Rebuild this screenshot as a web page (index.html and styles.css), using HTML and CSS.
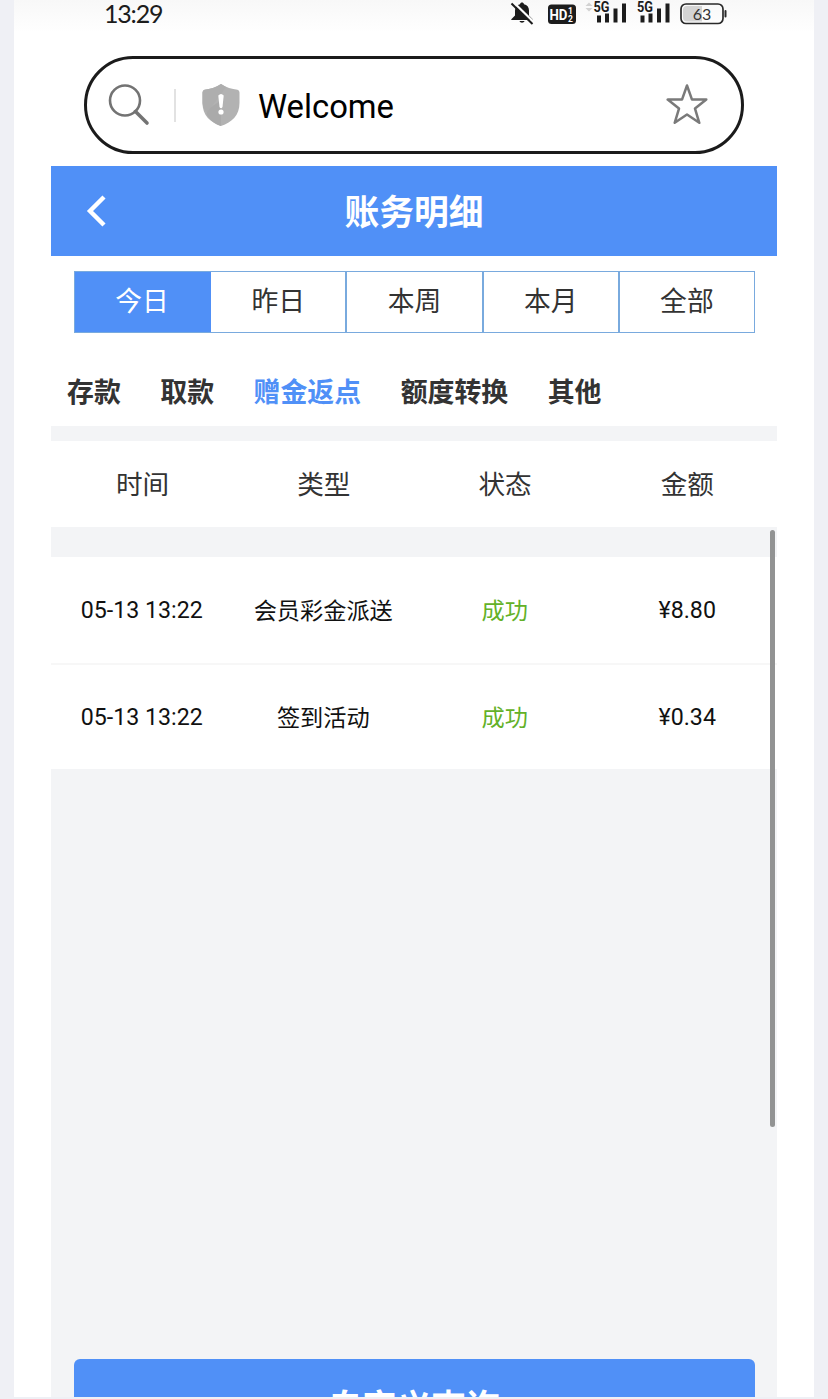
FILE: index.html
```html
<!DOCTYPE html>
<html lang="zh-CN">
<head>
  <meta charset="UTF-8">
  <meta name="viewport" content="width=device-width, initial-scale=1.0">
  <title>账务明细</title>
  <link rel="stylesheet" href="styles.css">
</head>
<body>
  <div class="phone">
    <div class="status-bar">
      <span class="clock">13:29</span>
      <svg class="status-icons" width="220" height="28" viewBox="0 0 220 28">
        <!-- muted bell -->
        <path d="M4.300 19.200 L8 15.400 V10.500 C8 7 10 4.700 13 4.200 C13.300 2 16.700 2 17 4.200 C20 4.700 22 7 22 10.500 V15.400 L25.700 19.200 V20 H4.300 Z" fill="#1c1c1c"/>
        <path d="M12.500 21 H17.500 C17 23.200 13 23.200 12.500 21 Z" fill="#1c1c1c"/>
        <path d="M6.500 2.400 L28 23.400" stroke="#fdfdfd" stroke-width="2.200"/>
        <path d="M4.500 3.500 L25.500 24" stroke="#1c1c1c" stroke-width="2"/>
        <!-- HD -->
        <rect x="41" y="4.500" width="28" height="19.500" rx="3.500" fill="#1c1c1c"/>
        <text x="42.500" y="19.500" class="hd" textLength="18" lengthAdjust="spacingAndGlyphs">HD</text>
        <text x="61" y="13.500" class="hd-sub">1</text>
        <text x="61" y="21.800" class="hd-sub">2</text>
        <!-- signals -->
        <path d="M78.500 6 L82 2.500 L85.500 6 Z M78.500 8 L82 11.500 L85.500 8 Z" fill="#d2d2d2"/>
        <text x="86.500" y="12" class="net" textLength="16" lengthAdjust="spacingAndGlyphs">5G</text>
        <path d="M92 15.500 V22.500 M100 13.500 V22.500 M108.500 8.500 V22.500 M117 3.500 V22.500" class="bars"/>
        <text x="130" y="12" class="net" textLength="16" lengthAdjust="spacingAndGlyphs">5G</text>
        <path d="M135.500 15.500 V22.500 M143.500 13.500 V22.500 M152 8.500 V22.500 M160.500 3.500 V22.500" class="bars"/>
        <!-- battery -->
        <rect x="174" y="4" width="42" height="19.500" rx="5" fill="none" stroke="#2a2a2a" stroke-width="1.700"/>
        <path d="M180 6 H195 V21.500 H180 Q176 21.500 176 17.500 V10 Q176 6 180 6 Z" fill="#d4d4d4"/>
        <rect x="217.500" y="10" width="2" height="7.500" rx="1" fill="#2a2a2a"/>
        <text x="195" y="20" class="level">63</text>
      </svg>
    </div>

    <div class="address-bar">
      <svg class="search-icon" width="42" height="42" viewBox="0 0 42 42">
        <circle cx="17" cy="16.500" r="15" fill="none" stroke="#737373" stroke-width="2.600"/>
        <path d="M27.500 27.500 L39 39" stroke="#737373" stroke-width="3.600" stroke-linecap="round"/>
      </svg>
      <span class="divider"></span>
      <svg class="shield" width="38" height="42" viewBox="0 0 38 42">
        <path d="M19 0 C24 3.500 30 5 35.500 5.700 Q37.500 6.200 37.500 8.500 V19 C37.500 31 30 38.500 19 42 C8 38.500 .5 31 .5 19 V8.500 Q.5 6.200 2.500 5.700 C8 5 14 3.500 19 0 Z" fill="#b2b2b2"/>
        <path d="M19 0 L24 3 L19 10 L5 29 C2 25.500 .5 22 .5 19 V8.500 Q.5 6.200 2.500 5.700 C8 5 14 3.500 19 0 Z" fill="#aeaeae"/>
        <path d="M19 17 C11 21 6 25 4.500 30 C7.500 36 13 40 19 42 Z" fill="#aaaaaa"/>
        <path d="M16.300 11.500 Q19 8.500 21.700 11.500 L20.500 23 Q19 25.500 17.500 23 Z" fill="#fff"/>
        <circle cx="19" cy="28" r="2.600" fill="#fff"/>
      </svg>
      <span class="page-name">Welcome</span>
      <svg class="star" width="44" height="42" viewBox="0 0 44 42">
        <path d="M22 1.500 L27 15.600 H41.300 L30 24.600 L34.300 38.800 L22 30.500 L9.700 38.800 L14 24.600 L2.700 15.600 H17 Z" fill="none" stroke="#7a7a7a" stroke-width="2.500" stroke-linejoin="round"/>
      </svg>
    </div>

    <div class="app">
      <header>
        <svg class="back" width="20" height="32" viewBox="0 0 20 32">
          <path d="M18 2 L4 16 L18 30" fill="none" stroke="#fff" stroke-width="4.400"/>
        </svg>
        <h1>账务明细</h1>
      </header>

      <nav class="filters">
        <div class="ranges">
          <a class="active">今日</a>
          <a>昨日</a>
          <a>本周</a>
          <a>本月</a>
          <a>全部</a>
        </div>
        <div class="types">
          <a>存款</a>
          <a>取款</a>
          <a class="active">赠金返点</a>
          <a>额度转换</a>
          <a>其他</a>
        </div>
      </nav>

      <div class="row head">
        <span>时间</span><span>类型</span><span>状态</span><span>金额</span>
      </div>

      <main>
        <div class="row">
          <span>05-13 13:22</span><span class="cjk">会员彩金派送</span><span class="cjk success">成功</span><span>¥8.80</span>
        </div>
        <div class="row">
          <span>05-13 13:22</span><span class="cjk">签到活动</span><span class="cjk success">成功</span><span>¥0.34</span>
        </div>
        <div class="scrollbar"></div>
        <button class="query">自定义查询</button>
      </main>
    </div>
  </div>
</body>
</html>
```
FILE: styles.css
```css
:root {
  --blue: #5090f7;
  --line: #79aade;
  --gray: #f3f4f6;
  --text: #333;
}
* { box-sizing: border-box; }
body {
  margin: 0;
  height: 1399px;
  overflow: hidden;
  background: #eff0f5;
  font-family: Roboto, "Noto Sans CJK SC", sans-serif;
  color: var(--text);
}

.phone {
  width: 800px;
  height: 1397px;
  margin: 0 auto;
  padding: 0 37px;
  overflow: hidden;
  display: flex;
  flex-direction: column;
  background: linear-gradient(#f8f8f8, #fefefe 30px, #fff 32px);
}

/* Status bar */
.status-bar {
  flex: none;
  height: 56px;
  padding: 0 50px 0 53px;
  display: flex;
  justify-content: space-between;
  align-items: flex-start;
}
.clock {
  font: 25px/26px Lato, sans-serif;
  letter-spacing: -1.2px;
  color: #1c1c1c;
}
.hd { font: bold 15px Roboto, sans-serif; fill: #fff; }
.hd-sub { font: bold 8.500px/8px Roboto, sans-serif; fill: #fff; }
.net { font: bold 14.500px Roboto, sans-serif; fill: #1c1c1c; }
.level { font: 16px Lato, sans-serif; fill: #333; text-anchor: middle; }
.bars { stroke: #1c1c1c; stroke-width: 4; }

/* Browser address bar */
.address-bar {
  flex: none;
  height: 98px;
  margin: 0 33px 12px;
  padding: 0 32px 0 21px;
  border: 3.500px solid #1b1b1b;
  border-radius: 49px;
  display: flex;
  align-items: center;
}
.divider {
  width: 2px;
  height: 33px;
  margin: 0 26px 0 24px;
  background: #e2e2e2;
}
.page-name {
  flex: 1;
  margin-left: 18px;
  padding-top: 3px;
  font-size: 32.8px;
  line-height: 40px;
  color: #000;
}

/* App */
.app {
  flex: 1;
  min-height: 0;
  display: flex;
  flex-direction: column;
  background: var(--gray);
}
header {
  flex: none;
  height: 90px;
  padding: 0 35px;
  display: grid;
  grid-template-columns: 20px 1fr 20px;
  align-items: center;
  background: var(--blue);
  color: #fff;
}
h1 {
  margin: 0;
  padding-top: 3px;
  font-size: 34.8px;
  line-height: 50px;
  font-weight: 700;
  text-align: center;
}

/* Filters */
.filters {
  flex: none;
  height: 170px;
  padding-top: 15px;
  background: #fff;
}
.ranges {
  display: flex;
  height: 62px;
  margin: 0 22px 0 23px;
  border: 1px solid var(--line);
}
.ranges a {
  flex: 1;
  border-right: 2px solid var(--line);
  font-size: 26.8px;
  line-height: 61px;
  text-align: center;
}
.ranges a:last-child { border-right: none; }
.ranges .active {
  background: var(--blue);
  border-color: var(--blue);
  color: #fff;
}
.types {
  display: flex;
  gap: 39.500px;
  padding: 40px 16px 0;
  font-size: 26.9px;
  line-height: 40px;
  font-weight: 700;
}
.types .active { color: var(--blue); }

/* Records */
.row {
  display: grid;
  grid-template-columns: repeat(4, 1fr);
  align-items: center;
  height: 106px;
  background: #fff;
  color: #111;
  font-size: 23.2px;
  text-align: center;
}
.row + .row { border-top: 2px solid #f7f7f7; }
.row .cjk { padding-bottom: 2px; }
.row.head {
  flex: none;
  height: 86px;
  margin-top: 15px;
  padding: 0 0 3px 1px;
  font-size: 26.6px;
  color: var(--text);
}
.row span:last-child { padding-left: 2px; }
.success { color: #63b128; }
main {
  position: relative;
  flex: 1;
  padding-top: 30px;
}
.scrollbar {
  position: absolute;
  top: 3px;
  right: 2px;
  width: 5px;
  height: 597px;
  border-radius: 3px;
  background: #929393;
}
.query {
  display: block;
  width: 681px;
  height: 90px;
  margin: 590px auto 0;
  border: none;
  border-radius: 6px;
  background: var(--blue);
  color: #fff;
  font: 700 34.5px/50px "Noto Sans CJK SC", sans-serif;
}
```
